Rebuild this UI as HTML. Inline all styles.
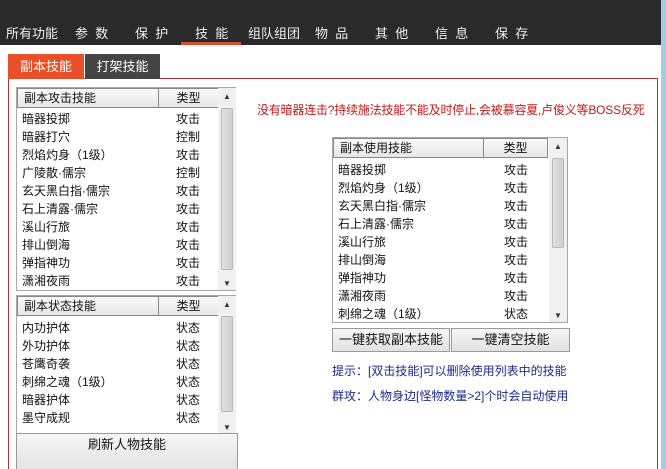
<!DOCTYPE html>
<html style="width:666px;height:469px;overflow:hidden"><head><meta charset="utf-8"><style>
*{margin:0;padding:0;box-sizing:border-box}
body{width:666px;height:469px;overflow:hidden;background:#fff;position:relative;font-family:"Liberation Sans","Noto Sans CJK SC",sans-serif;font-size:12px;color:#111}
.a{position:absolute}
#top{left:0;top:0;width:666px;height:45px;background:#2a2a2a}
.nav{top:23px;color:#eee;font-size:13px;white-space:nowrap}
#ul{left:181px;top:42px;width:60px;height:3px;background:#d9502e}
#blue{left:661px;top:0;width:5px;height:469px;background:#9ccfe6}
.tab{top:54px;height:25px;color:#fff;font-size:13px;text-align:center;line-height:25px}
#panel{left:8px;top:78px;width:650px;height:391px;border:1px solid #b0303a;border-bottom:none}
.list{border:1px solid #a8a8a8;background:#fff}
.hd{position:absolute;top:0;height:20px;background:linear-gradient(#fafafa,#e6e6e6);border:1px solid #888;line-height:18px;font-size:12px}
.row{position:absolute;height:18px;line-height:18px;font-size:12px;white-space:nowrap}
.sb{position:absolute;top:0;width:18px;background:#f0f0f0}
.thumb{position:absolute;left:3px;width:12px;background:linear-gradient(90deg,#e0e0e0,#cfcfcf);border:1px solid #b8b8b8;border-radius:2px}
.btn{background:linear-gradient(#f6f6f6,#e2e2e2);border:1px solid #9a9a9a;text-align:center;font-size:13px}
.blue{color:#1a2a8c;font-size:12px}
</style></head><body>
<div id="top" class="a"></div>
<div class="a nav" style="left:6px">所有功能</div>
<div class="a nav" style="left:75px">参&nbsp;&nbsp;数</div>
<div class="a nav" style="left:135px">保&nbsp;&nbsp;护</div>
<div class="a nav" style="left:195px">技&nbsp;&nbsp;能</div>
<div class="a nav" style="left:248px">组队组团</div>
<div class="a nav" style="left:315px">物&nbsp;&nbsp;品</div>
<div class="a nav" style="left:375px">其&nbsp;&nbsp;他</div>
<div class="a nav" style="left:435px">信&nbsp;&nbsp;息</div>
<div class="a nav" style="left:495px">保&nbsp;&nbsp;存</div>
<div id="ul" class="a"></div>
<div id="blue" class="a"></div>
<div id="panel" class="a"></div>
<div class="a tab" style="left:8px;width:76px;background:#e8502a">副本技能</div>
<div class="a tab" style="left:85px;width:75px;background:#444">打架技能</div>

<div class="a list" style="left:16px;top:87px;width:220px;height:204px">
<div class="hd" style="left:0;width:142px;padding-left:6px">副本攻击技能</div>
<div class="hd" style="left:141px;width:61px;text-align:center">类型</div>
<div class="sb" style="left:201px;height:202px"><div style="text-align:center;font-size:8px;color:#333;margin-top:4px">▲</div><div class="thumb" style="top:20px;height:162px"></div><div style="position:absolute;bottom:2px;width:18px;text-align:center;font-size:8px;color:#333">▼</div></div>
<div class="row" style="left:5px;top:22px">暗器投掷</div><div class="row" style="left:159px;top:22px">攻击</div>
<div class="row" style="left:5px;top:40px">暗器打穴</div><div class="row" style="left:159px;top:40px">控制</div>
<div class="row" style="left:5px;top:58px">烈焰灼身（1级）</div><div class="row" style="left:159px;top:58px">攻击</div>
<div class="row" style="left:5px;top:76px">广陵散·儒宗</div><div class="row" style="left:159px;top:76px">控制</div>
<div class="row" style="left:5px;top:94px">玄天黑白指·儒宗</div><div class="row" style="left:159px;top:94px">攻击</div>
<div class="row" style="left:5px;top:112px">石上清露·儒宗</div><div class="row" style="left:159px;top:112px">攻击</div>
<div class="row" style="left:5px;top:130px">溪山行旅</div><div class="row" style="left:159px;top:130px">攻击</div>
<div class="row" style="left:5px;top:148px">排山倒海</div><div class="row" style="left:159px;top:148px">攻击</div>
<div class="row" style="left:5px;top:166px">弹指神功</div><div class="row" style="left:159px;top:166px">攻击</div>
<div class="row" style="left:5px;top:184px">潇湘夜雨</div><div class="row" style="left:159px;top:184px">攻击</div>
</div>

<div class="a list" style="left:16px;top:295px;width:220px;height:140px">
<div class="hd" style="left:0;width:142px;padding-left:6px">副本状态技能</div>
<div class="hd" style="left:141px;width:61px;text-align:center">类型</div>
<div class="sb" style="left:201px;height:138px"><div style="text-align:center;font-size:8px;color:#333;margin-top:4px">▲</div><div class="thumb" style="top:20px;height:96px"></div><div style="position:absolute;bottom:2px;width:18px;text-align:center;font-size:8px;color:#333">▼</div></div>
<div class="row" style="left:5px;top:23px">内功护体</div><div class="row" style="left:159px;top:23px">状态</div>
<div class="row" style="left:5px;top:41px">外功护体</div><div class="row" style="left:159px;top:41px">状态</div>
<div class="row" style="left:5px;top:59px">苍鹰奇袭</div><div class="row" style="left:159px;top:59px">状态</div>
<div class="row" style="left:5px;top:77px">刺绵之魂（1级）</div><div class="row" style="left:159px;top:77px">状态</div>
<div class="row" style="left:5px;top:95px">暗器护体</div><div class="row" style="left:159px;top:95px">状态</div>
<div class="row" style="left:5px;top:113px">墨守成规</div><div class="row" style="left:159px;top:113px">状态</div>
</div>
<div class="a btn" style="left:16px;top:433px;width:222px;height:40px;line-height:22px">刷新人物技能</div>

<div class="a" style="left:257px;top:101px;color:#c41818;font-size:12px;white-space:nowrap;letter-spacing:-0.2px">没有暗器连击?持续施法技能不能及时停止,会被慕容夏,卢俊义等BOSS反死</div>

<div class="a list" style="left:332px;top:137px;width:236px;height:186px">
<div class="hd" style="left:0;width:151px;padding-left:6px">副本使用技能</div>
<div class="hd" style="left:150px;width:65px;text-align:center">类型</div>
<div class="sb" style="left:216px;height:184px"><div style="text-align:center;font-size:8px;color:#333;margin-top:4px">▲</div><div class="thumb" style="top:20px;height:90px"></div><div style="position:absolute;bottom:2px;width:18px;text-align:center;font-size:8px;color:#333">▼</div></div>
<div class="row" style="left:5px;top:23px">暗器投掷</div><div class="row" style="left:171px;top:23px">攻击</div>
<div class="row" style="left:5px;top:41px">烈焰灼身（1级）</div><div class="row" style="left:171px;top:41px">攻击</div>
<div class="row" style="left:5px;top:59px">玄天黑白指·儒宗</div><div class="row" style="left:171px;top:59px">攻击</div>
<div class="row" style="left:5px;top:77px">石上清露·儒宗</div><div class="row" style="left:171px;top:77px">攻击</div>
<div class="row" style="left:5px;top:95px">溪山行旅</div><div class="row" style="left:171px;top:95px">攻击</div>
<div class="row" style="left:5px;top:113px">排山倒海</div><div class="row" style="left:171px;top:113px">攻击</div>
<div class="row" style="left:5px;top:131px">弹指神功</div><div class="row" style="left:171px;top:131px">攻击</div>
<div class="row" style="left:5px;top:149px">潇湘夜雨</div><div class="row" style="left:171px;top:149px">攻击</div>
<div class="row" style="left:5px;top:167px">刺绵之魂（1级）</div><div class="row" style="left:171px;top:167px">状态</div>
</div>
<div class="a btn" style="left:332px;top:328px;width:118px;height:24px;line-height:22px">一键获取副本技能</div>
<div class="a btn" style="left:451px;top:328px;width:119px;height:24px;line-height:22px">一键清空技能</div>
<div class="a blue" style="left:332px;top:362px">提示：[双击技能]可以删除使用列表中的技能</div>
<div class="a blue" style="left:332px;top:387px">群攻：人物身边[怪物数量&gt;2]个时会自动使用</div>
</body></html>
